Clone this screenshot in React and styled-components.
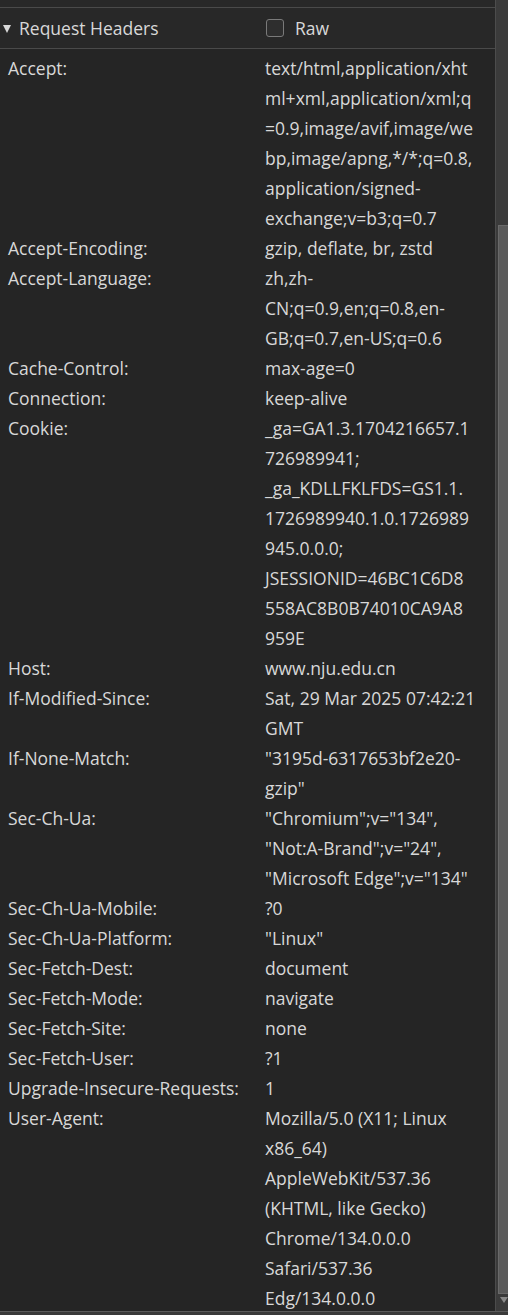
import React from "react";
import styled, { createGlobalStyle } from "styled-components";

const GlobalStyle = createGlobalStyle`
  html, body { margin: 0; padding: 0; background: #252525; }
  body { font-family: "Open Sans", "Noto Sans", sans-serif; }
  * { box-sizing: border-box; }
`;

const headers = [
  ["Accept:", ["text/html,application/xht", "ml+xml,application/xml;q", "=0.9,image/avif,image/we", "bp,image/apng,*/*;q=0.8,", "application/signed-", "exchange;v=b3;q=0.7"]],
  ["Accept-Encoding:", ["gzip, deflate, br, zstd"]],
  ["Accept-Language:", ["zh,zh-", "CN;q=0.9,en;q=0.8,en-", "GB;q=0.7,en-US;q=0.6"]],
  ["Cache-Control:", ["max-age=0"]],
  ["Connection:", ["keep-alive"]],
  ["Cookie:", ["_ga=GA1.3.1704216657.1", "726989941;", "_ga_KDLLFKLFDS=GS1.1.", "1726989940.1.0.1726989", "945.0.0.0;", "JSESSIONID=46BC1C6D8", "558AC8B0B74010CA9A8", "959E"]],
  ["Host:", ["www.nju.edu.cn"]],
  ["If-Modified-Since:", ["Sat, 29 Mar 2025 07:42:21", "GMT"]],
  ["If-None-Match:", ['"3195d-6317653bf2e20-', 'gzip"']],
  ["Sec-Ch-Ua:", ['"Chromium";v="134",', '"Not:A-Brand";v="24",', '"Microsoft Edge";v="134"']],
  ["Sec-Ch-Ua-Mobile:", ["?0"]],
  ["Sec-Ch-Ua-Platform:", ['"Linux"']],
  ["Sec-Fetch-Dest:", ["document"]],
  ["Sec-Fetch-Mode:", ["navigate"]],
  ["Sec-Fetch-Site:", ["none"]],
  ["Sec-Fetch-User:", ["?1"]],
  ["Upgrade-Insecure-Requests:", ["1"]],
  ["User-Agent:", ["Mozilla/5.0 (X11; Linux", "x86_64)", "AppleWebKit/537.36", "(KHTML, like Gecko)", "Chrome/134.0.0.0", "Safari/537.36", "Edg/134.0.0.0"]],
];

const Page = styled.div`
  width: 508px;
  height: 1315px;
  display: flex;
  flex-direction: column;
  background: #252525;
  color: #d8d8d8;
  overflow: hidden;
`;

const Body = styled.div`
  flex: 1;
  display: flex;
  min-height: 0;
`;

const Main = styled.div`
  flex: 1;
  display: flex;
  flex-direction: column;
  min-width: 0;
  overflow: hidden;
`;

const TopStrip = styled.div`
  flex: none;
  height: 8px;
  background: #282828;
  border-bottom: 1px solid #4a4a4a;
`;

const HeaderBar = styled.div`
  flex: none;
  height: 41px;
  display: grid;
  grid-template-columns: 265px 1fr;
  align-items: center;
  background: #282828;
  border-bottom: 1px solid #4a4a4a;
  font-size: 17.5px;
`;

const Toggle = styled.div`
  display: flex;
  align-items: center;
  gap: 8px;
  padding-left: 3px;
`;

const Triangle = styled.span`
  width: 0;
  height: 0;
  border-left: 4.5px solid transparent;
  border-right: 4.5px solid transparent;
  border-top: 8px solid #d8d8d8;
  margin-top: 1px;
`;

const RawToggle = styled.label`
  display: flex;
  align-items: center;
  gap: 11px;
  padding-left: 1px;
`;

const CheckBox = styled.span`
  width: 18px;
  height: 18px;
  border: 1.5px solid #7a7a7a;
  border-radius: 3px;
  background: #2e2e2e;
`;

const Table = styled.div`
  display: flex;
  flex-direction: column;
  padding-top: 4px;
`;

const Row = styled.div`
  display: grid;
  grid-template-columns: 257px 1fr;
  padding-left: 8px;
  font-size: 17.5px;
  line-height: 30px;
`;

const Name = styled.div`
  white-space: nowrap;
`;

const Value = styled.div`
  display: flex;
  flex-direction: column;
`;

const Line = styled.span`
  white-space: nowrap;
`;

const Scrollbar = styled.div`
  width: 13px;
  display: flex;
  flex-direction: column;
  background: #3b3b3b;
  border-left: 1px solid #4c4c4c;
`;

const Thumb = styled.div`
  margin-top: 225px;
  margin-left: 2px;
  height: 1069px;
  background: #5b5b5b;
  border: 1px solid #6a6a6a;
  border-right: none;
`;

const Arrow = styled.div`
  margin: 3px 0 0 4px;
  width: 0;
  height: 0;
  border-left: 4px solid transparent;
  border-right: 4px solid transparent;
  border-top: 6px solid #8a8a8a;
`;

const BottomEdge = styled.div`
  flex: none;
  height: 4px;
  background: #3a3a3a;
  border-top: 1px solid #5a5a5a;
`;

export default function App() {
  return (
    <>
      <GlobalStyle />
      <Page>
        <Body>
          <Main>
            <TopStrip />
            <HeaderBar>
              <Toggle>
                <Triangle />
                <span>Request Headers</span>
              </Toggle>
              <RawToggle>
                <CheckBox />
                <span>Raw</span>
              </RawToggle>
            </HeaderBar>
            <Table>
              {headers.map(([name, lines]) => (
                <Row key={name}>
                  <Name>{name}</Name>
                  <Value>
                    {lines.map((l, i) => (
                      <Line key={i}>{l}</Line>
                    ))}
                  </Value>
                </Row>
              ))}
            </Table>
          </Main>
          <Scrollbar>
            <Thumb />
            <Arrow />
          </Scrollbar>
        </Body>
        <BottomEdge />
      </Page>
    </>
  );
}
